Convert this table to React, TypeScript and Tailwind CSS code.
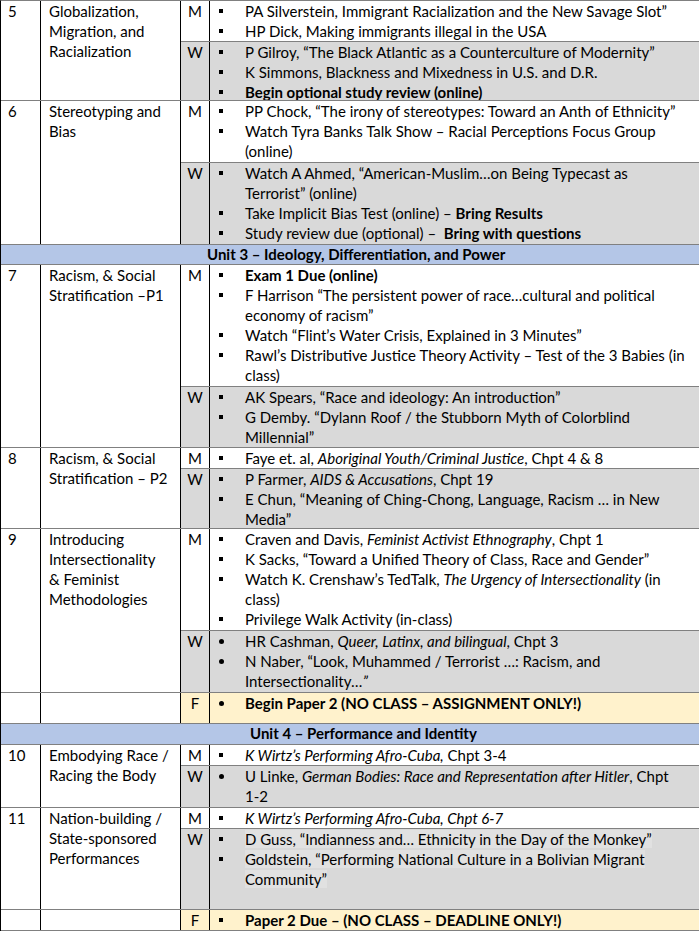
import React from 'react';

type Seg = string | { t: string; b?: boolean; i?: boolean };
type Item = { bullet: 'sq' | 'dot'; lines: Seg[][] };
type Sub = { day: string; bg: 'w' | 'g' | 'y'; h: string; items: Item[]; extra?: string; hl?: boolean };
type Week = { kind: 'week'; num: string; topic: string[]; subs: Sub[] };
type Header = { kind: 'header'; text: string; pl: string; h: string };
type Block = Week | Header;

const b = (t: string): Seg => ({ t, b: true });
const it = (t: string): Seg => ({ t, i: true });
const sq = (...lines: Seg[][]): Item => ({ bullet: 'sq', lines });
const dot = (...lines: Seg[][]): Item => ({ bullet: 'dot', lines });

const blocks: Block[] = [
  {
    kind: 'week',
    num: '5',
    topic: ['Globalization,', 'Migration, and', 'Racialization'],
    subs: [
      {
        day: 'M',
        bg: 'w',
        h: 'h-[41px]',
        items: [
          sq(['PA Silverstein, Immigrant Racialization and the New Savage Slot\u201d']),
          sq(['HP Dick, Making immigrants illegal in the USA']),
        ],
      },
      {
        day: 'W',
        bg: 'g',
        h: 'h-[58px]',
        items: [
          sq(['P Gilroy, \u201cThe Black Atlantic as a Counterculture of Modernity\u201d']),
          sq(['K Simmons, Blackness and Mixedness in U.S. and D.R.']),
          sq([b('Begin optional study review (online)')]),
        ],
      },
    ],
  },
  {
    kind: 'week',
    num: '6',
    topic: ['Stereotyping and', 'Bias'],
    subs: [
      {
        day: 'M',
        bg: 'w',
        h: 'h-[62px]',
        items: [
          sq(['PP Chock, \u201cThe irony of stereotypes: Toward an Anth of Ethnicity\u201d']),
          sq(['Watch Tyra Banks Talk Show \u2013 Racial Perceptions Focus Group'], ['(online)']),
        ],
      },
      {
        day: 'W',
        bg: 'g',
        h: 'h-[81px]',
        items: [
          sq(['Watch A Ahmed, \u201cAmerican-Muslim\u2026on Being Typecast as'], ['Terrorist\u201d (online)']),
          sq(['Take Implicit Bias Test (online) \u2013 ', b('Bring Results')]),
          sq(['Study review due (optional) \u2013\u00a0 ', b('Bring with questions')]),
        ],
      },
    ],
  },
  { kind: 'header', text: 'Unit 3 \u2013 Ideology, Differentiation, and Power', pl: 'pl-[206px]', h: 'h-[20px]' },
  {
    kind: 'week',
    num: '7',
    topic: ['Racism, & Social', 'Stratification \u2013P1'],
    subs: [
      {
        day: 'M',
        bg: 'w',
        h: 'h-[122px]',
        items: [
          sq([b('Exam 1 Due (online)')]),
          sq(['F Harrison \u201cThe persistent power of race\u2026cultural and political'], ['economy of racism\u201d']),
          sq(['Watch \u201cFlint\u2019s Water Crisis, Explained in 3 Minutes\u201d']),
          sq(['Rawl\u2019s Distributive Justice Theory Activity \u2013 Test of the 3 Babies (in'], ['class)']),
        ],
      },
      {
        day: 'W',
        bg: 'g',
        h: 'h-[60px]',
        items: [
          sq(['AK Spears, \u201cRace and ideology: An introduction\u201d']),
          sq(['G Demby. \u201cDylann Roof / the Stubborn Myth of Colorblind'], ['Millennial\u201d']),
        ],
      },
    ],
  },
  {
    kind: 'week',
    num: '8',
    topic: ['Racism, & Social', 'Stratification \u2013 P2'],
    subs: [
      {
        day: 'M',
        bg: 'w',
        h: 'h-[21px]',
        items: [sq(['Faye et. al, ', it('Aboriginal Youth/Criminal Justice'), ', Chpt 4 & 8'])],
      },
      {
        day: 'W',
        bg: 'g',
        h: 'h-[59px]',
        items: [
          sq(['P Farmer, ', it('AIDS & Accusations'), ', Chpt 19']),
          sq(['E Chun, \u201cMeaning of Ching-Chong, Language, Racism \u2026 in New'], ['Media\u201d']),
        ],
      },
    ],
  },
  {
    kind: 'week',
    num: '9',
    topic: ['Introducing', 'Intersectionality', '& Feminist', 'Methodologies'],
    subs: [
      {
        day: 'M',
        bg: 'w',
        h: 'h-[102px]',
        items: [
          sq(['Craven and Davis, ', it('Feminist Activist Ethnography'), ', Chpt 1']),
          sq(['K Sacks, \u201cToward a Unified Theory of Class, Race and Gender\u201d']),
          sq(['Watch K. Crenshaw\u2019s TedTalk, ', it('The Urgency of Intersectionality'), ' (in'], ['class)']),
          sq(['Privilege Walk Activity (in-class)']),
        ],
      },
      {
        day: 'W',
        bg: 'g',
        h: 'h-[61px]',
        items: [
          dot(['HR Cashman, ', it('Queer, Latinx, and bilingual'), ', Chpt 3']),
          dot(['N Naber, \u201cLook, Muhammed / Terrorist \u2026: Racism, and'], ['Intersectionality', it('\u2026\u201d')]),
        ],
      },
    ],
  },
  {
    kind: 'week',
    num: '',
    topic: [],
    subs: [
      {
        day: 'F',
        bg: 'y',
        h: 'h-[30px]',
        items: [dot([b('Begin Paper 2 (NO CLASS \u2013 ASSIGNMENT ONLY!)')])],
      },
    ],
  },
  { kind: 'header', text: 'Unit 4 \u2013 Performance and Identity', pl: 'pl-[249px]', h: 'h-[21px]' },
  {
    kind: 'week',
    num: '10',
    topic: ['Embodying Race /', 'Racing the Body'],
    subs: [
      {
        day: 'M',
        bg: 'w',
        h: 'h-[21px]',
        items: [sq([it('K Wirtz\u2019s Performing Afro-Cuba,'), ' Chpt 3-4'])],
      },
      {
        day: 'W',
        bg: 'g',
        h: 'h-[41px]',
        items: [
          dot(['U Linke, ', it('German Bodies: Race and Representation after Hitler'), ', Chpt'], ['1-2']),
        ],
      },
    ],
  },
  {
    kind: 'week',
    num: '11',
    topic: ['Nation-building /', 'State-sponsored', 'Performances'],
    subs: [
      {
        day: 'M',
        bg: 'w',
        h: 'h-[21px]',
        items: [sq([it('K Wirtz\u2019s Performing Afro-Cuba, Chpt 6-7')])],
      },
      {
        day: 'W',
        bg: 'g',
        hl: true,
        h: 'h-[80px]',
        items: [
          sq(['D Guss, \u201cIndianness and\u2026 Ethnicity in the Day of the Monkey\u201d']),
          sq(['Goldstein, \u201cPerforming National Culture in a Bolivian Migrant '], ['Community\u201d']),
        ],
      },
    ],
  },
  {
    kind: 'week',
    num: '',
    topic: [],
    subs: [
      {
        day: 'F',
        bg: 'y',
        h: 'h-[20px]',
        items: [sq([b('Paper 2 Due \u2013 (NO CLASS \u2013 DEADLINE ONLY!)')])],
      },
    ],
  },
];

const bgClass: Record<Sub['bg'], string> = {
  w: 'bg-white',
  g: 'bg-[#d9d9d9]',
  y: 'bg-[#fff2cc]',
};

function Segs({ segs }: { segs: Seg[] }) {
  return (
    <>
      {segs.map((s, i) =>
        typeof s === 'string' ? (
          <React.Fragment key={i}>{s}</React.Fragment>
        ) : (
          <span key={i} className={(s.b ? 'font-bold ' : '') + (s.i ? 'italic' : '')}>
            {s.t}
          </span>
        )
      )}
    </>
  );
}

function Bullet({ kind }: { kind: 'sq' | 'dot' }) {
  return (
    <div className="w-[35px] shrink-0 h-[20px] flex items-center pl-[9px]">
      {kind === 'sq' ? (
        <div className="w-[4px] h-[4px] bg-black" />
      ) : (
        <div className="w-[5px] h-[5px] rounded-full bg-black" />
      )}
    </div>
  );
}

function ItemRow({ item, hl }: { item: Item; hl?: boolean }) {
  return (
    <div className="flex">
      <Bullet kind={item.bullet} />
      <div className="flex flex-col">
        {item.lines.map((l, i) => (
          <div key={i} className="whitespace-nowrap h-[20px]">
            {hl ? (
              <span className="bg-[#e1e1e1]">
                <Segs segs={l} />
              </span>
            ) : (
              <Segs segs={l} />
            )}
          </div>
        ))}
      </div>
    </div>
  );
}

function WeekBlock({ w }: { w: Week }) {
  return (
    <div className="flex border-b border-[#808080]">
      <div className="w-[40px] shrink-0 border-r border-black pl-[7px] bg-white">{w.num}</div>
      <div className="w-[140px] shrink-0 border-r border-black pl-[8px] bg-white">
        {w.topic.map((t, i) => (
          <div key={i} className="whitespace-nowrap">
            {t}
          </div>
        ))}
      </div>
      <div className="flex-1 flex flex-col">
        {w.subs.map((s, i) => (
          <div
            key={i}
            className={`flex overflow-hidden ${s.h} ${bgClass[s.bg]} ${i < w.subs.length - 1 ? 'border-b border-[#808080]' : ''}`}
          >
            <div className="w-[29px] shrink-0 border-r border-black text-center">{s.day}</div>
            <div className="flex-1 flex flex-col">
              {s.items.map((it2, j) => (
                <ItemRow key={j} item={it2} hl={s.hl} />
              ))}
            </div>
          </div>
        ))}
      </div>
    </div>
  );
}

export default function App() {
  return (
    <div className="w-[699px] h-[952px] overflow-hidden bg-white">
      <div className="w-[760px] border-l border-t border-l-black border-t-[#808080] font-['Lato',sans-serif] text-[15px] leading-[20px] text-black">
        {blocks.map((bl, i) =>
          bl.kind === 'header' ? (
            <div
              key={i}
              className={`bg-[#b4c6e7] border-b border-[#808080] font-bold whitespace-nowrap leading-[19px] ${bl.h} ${bl.pl}`}
            >
              {bl.text}
            </div>
          ) : (
            <WeekBlock key={i} w={bl} />
          )
        )}
      </div>
    </div>
  );
}
